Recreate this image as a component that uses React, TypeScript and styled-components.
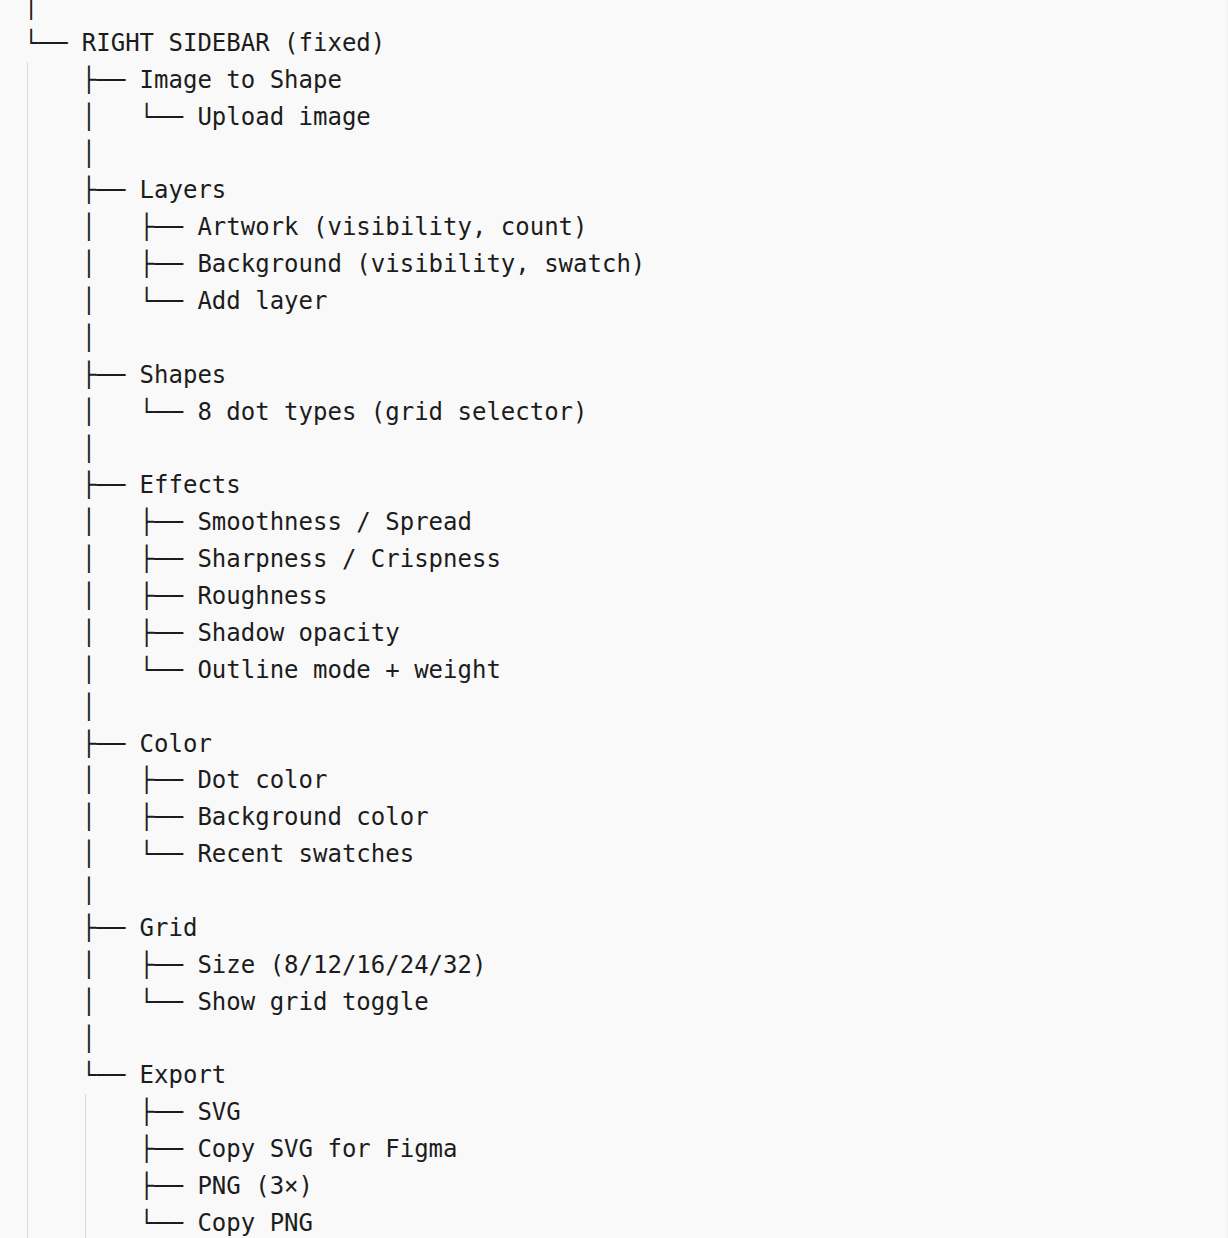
import React from "react";
import styled, { createGlobalStyle } from "styled-components";

const GlobalStyle = createGlobalStyle`
  html, body {
    margin: 0;
    padding: 0;
    background: #f9f9f9;
  }
  #root {
    min-height: 100vh;
  }
`;

const LINE_HEIGHT = 36.875;

const Page = styled.main`
  min-height: 1238px;
  background: #f9f9f9;
  border-right: 2px solid #f3f3f3;
  box-sizing: border-box;
  overflow: hidden;
`;

const CodeBlock = styled.pre`
  margin: -12px 0 0 0;
  padding: 0 0 0 24px;
  font-family: "DejaVu Sans Mono", "Liberation Mono", monospace;
  font-size: 24px;
  line-height: ${LINE_HEIGHT}px;
  color: #1c1c1c;
  white-space: pre;
`;

const Line = styled.div`
  display: flex;
  height: ${LINE_HEIGHT}px;
`;

const Guide = styled.span`
  display: inline-block;
  flex: none;
  width: 4ch;
  height: 100%;
  background-image: linear-gradient(#dadada, #dadada);
  background-size: 1px 100%;
  background-position: 3px 0;
  background-repeat: no-repeat;
`;

const Text = styled.span`
  display: inline-block;
`;

const source = `│
└── RIGHT SIDEBAR (fixed)
    ├── Image to Shape
    │   └── Upload image
    │
    ├── Layers
    │   ├── Artwork (visibility, count)
    │   ├── Background (visibility, swatch)
    │   └── Add layer
    │
    ├── Shapes
    │   └── 8 dot types (grid selector)
    │
    ├── Effects
    │   ├── Smoothness / Spread
    │   ├── Sharpness / Crispness
    │   ├── Roughness
    │   ├── Shadow opacity
    │   └── Outline mode + weight
    │
    ├── Color
    │   ├── Dot color
    │   ├── Background color
    │   └── Recent swatches
    │
    ├── Grid
    │   ├── Size (8/12/16/24/32)
    │   └── Show grid toggle
    │
    └── Export
        ├── SVG
        ├── Copy SVG for Figma
        ├── PNG (3×)
        └── Copy PNG`;

const lines = source.split("\n").map((raw) => {
  const lead = raw.match(/^ */)?.[0].length ?? 0;
  const guides = Math.floor(lead / 4);
  return { guides, text: raw.slice(guides * 4) };
});

export default function App() {
  return (
    <>
      <GlobalStyle />
      <Page>
        <CodeBlock>
          {lines.map((line, i) => (
            <Line key={i}>
              {Array.from({ length: line.guides }).map((_, g) => (
                <Guide key={g} />
              ))}
              <Text>{line.text}</Text>
            </Line>
          ))}
        </CodeBlock>
      </Page>
    </>
  );
}
